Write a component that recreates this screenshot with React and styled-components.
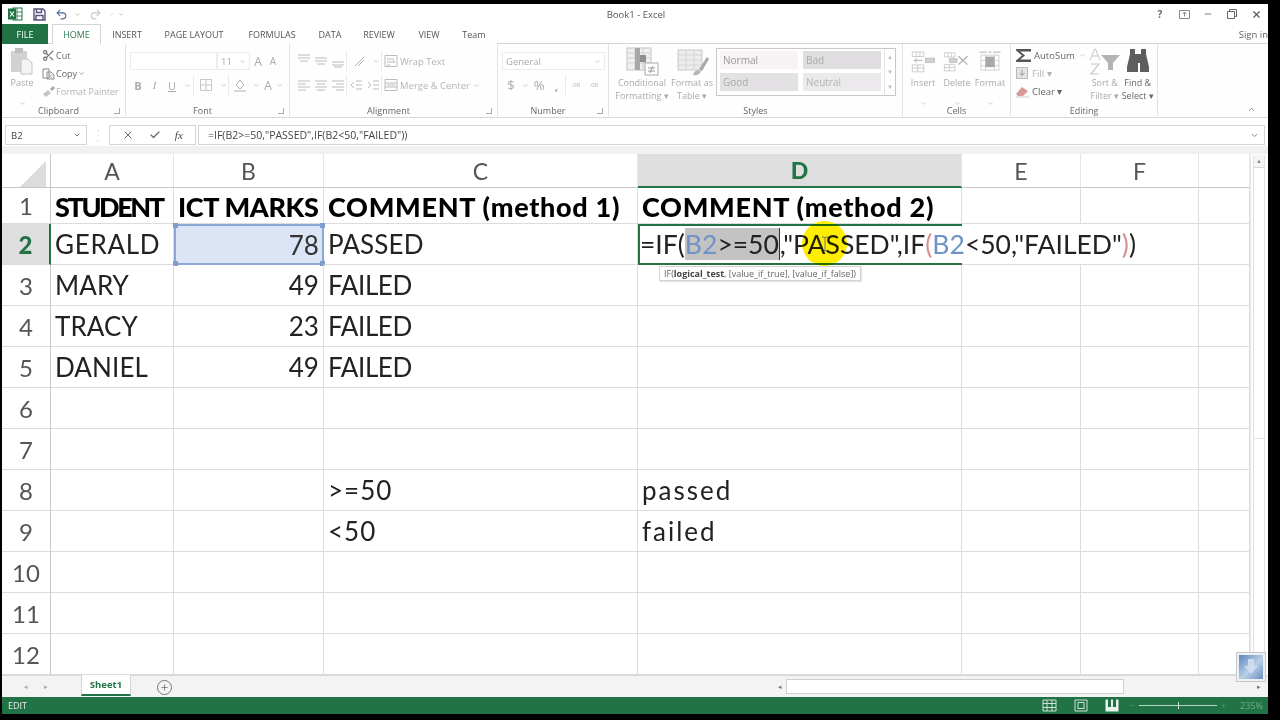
import React from "react";
import styled, { createGlobalStyle } from "styled-components";
import { Scissors, X, Check, ChevronUp, ChevronDown, Plus, Minus, Undo2, Redo2 } from "lucide-react";

const GlobalStyle = createGlobalStyle`
  html, body { margin: 0; padding: 0; background: #000; }
  body { width: 1280px; height: 720px; overflow: hidden; font-family: "Open Sans", "Liberation Sans", sans-serif; }
`;

const Frame = styled.div`
  width: 1280px;
  height: 720px;
  background: #000;
  padding: 4px 12px 6px 2px;
  box-sizing: border-box;
`;

const Window = styled.div`
  position: relative;
  width: 1266px;
  height: 710px;
  background: #fff;
  display: flex;
  flex-direction: column;
  overflow: hidden;
  filter: blur(0.4px);
`;

const TitleBar = styled.div`
  height: 20px;
  display: flex;
  align-items: center;
  position: relative;
  color: #666;
  flex: none;
`;

const QuickSlot = styled.div`
  width: ${(p) => p.$w}px;
  display: flex;
  align-items: center;
  justify-content: center;
  gap: ${(p) => p.$gap || 2}px;
  color: ${(p) => p.$color || "#666"};
`;

const Title = styled.div`
  flex: 1;
  text-align: center;
  font-size: 9.5px;
  color: #555;
`;

const TabRow = styled.div`
  height: 20px;
  display: flex;
  align-items: stretch;
  flex: none;
  box-shadow: inset 0 -1px 0 #d4d4d4;
`;

const Tab = styled.div`
  width: ${(p) => p.$w}px;
  margin-right: ${(p) => p.$gap || 0}px;
  display: flex;
  align-items: center;
  justify-content: center;
  font-size: 9px;
  color: ${(p) => (p.$active ? "#2c7a50" : "#555")};
  background: ${(p) => (p.$file ? "#217346" : "#fff")};
  ${(p) => p.$file && "color: #fff;"}
  ${(p) => p.$active && "border: 1px solid #d4d4d4; border-bottom: 0; box-sizing: border-box;"}
`;

const SignIn = styled.div`
  margin-left: auto;
  font-size: 9.5px;
  color: #666;
  padding-top: 1px;
  align-self: center;
  white-space: nowrap;
`;

const Ribbon = styled.div`
  height: 74px;
  flex: none;
  display: flex;
  background: #fefefe;
  border-bottom: 1px solid #d8d8d8;
  box-sizing: border-box;
`;

const Group = styled.div`
  width: ${(p) => p.$w}px;
  flex: none;
  display: flex;
  flex-direction: column;
  box-sizing: border-box;
  border-right: ${(p) => (p.$last ? "0" : "1px solid #e4e4e4")};
  margin-bottom: 1px;
`;

const GroupBody = styled.div`
  flex: 1;
  display: flex;
  padding: ${(p) => p.$pad || "0"};
  gap: ${(p) => p.$gap || 0}px;
  min-height: 0;
`;

const GroupLabel = styled.div`
  height: 12px;
  display: grid;
  grid-template-columns: 1fr auto 1fr;
  align-items: center;
  font-size: 9px;
  color: #666;
  padding: 0 5px;
`;

const GroupName = styled.span`
  margin-right: ${(p) => (p.$shift ? 10 : 0)}px;
`;

const Launcher = styled.span`
  justify-self: end;
  width: 5px;
  height: 5px;
  border-right: 1px solid #aaa;
  border-bottom: 1px solid #aaa;
`;

const Stack = styled.div`
  display: flex;
  flex-direction: column;
  gap: ${(p) => p.$gap || 0}px;
  padding-top: ${(p) => p.$top || 0}px;
`;

const ToolRow = styled.div`
  height: 18px;
  display: flex;
  align-items: center;
  gap: ${(p) => p.$gap || 0}px;
  font-size: ${(p) => p.$size || 9}px;
  color: ${(p) => (p.$dim ? "#b4b4b4" : "#666")};
  white-space: nowrap;
`;

const Tool = styled.div`
  width: ${(p) => p.$w}px;
  height: 18px;
  flex: none;
  display: flex;
  align-items: center;
  justify-content: center;
  font-size: ${(p) => p.$size || 11}px;
  font-weight: ${(p) => (p.$bold ? 700 : 400)};
  font-style: ${(p) => (p.$italic ? "italic" : "normal")};
  text-decoration: ${(p) => (p.$under ? "underline" : "none")};
  color: ${(p) => p.$color || "#aaa"};
  font-family: ${(p) => (p.$serif ? '"Liberation Serif", serif' : "inherit")};
`;

const Sep = styled.div`
  width: 1px;
  height: 20px;
  background: #eaeaea;
  flex: none;
`;

const FieldBox = styled.div`
  width: ${(p) => p.$w}px;
  height: 18px;
  flex: none;
  box-sizing: border-box;
  border: 1px solid #ececec;
  background: #fff;
  display: flex;
  align-items: center;
  justify-content: space-between;
  padding: 0 3px;
  font-size: 9.5px;
  color: #aaa;
`;

const Large = styled.div`
  width: ${(p) => p.$w}px;
  margin-right: ${(p) => p.$mr || 0}px;
  flex: none;
  display: flex;
  flex-direction: column;
  align-items: center;
  padding-top: 3px;
  font-size: 9px;
  line-height: 13px;
  color: ${(p) => (p.$dark ? "#666" : "#aaa")};
  text-align: center;
  white-space: nowrap;
  & > svg { height: 29px; flex: none; }
`;

const Gallery = styled.div`
  width: 180px;
  height: 48px;
  margin-top: 4px;
  box-sizing: border-box;
  border: 1px solid #c8c8c8;
  display: flex;
`;

const StyleGrid = styled.div`
  flex: 1;
  display: grid;
  grid-template-columns: 78px 78px;
  grid-template-rows: 18px 18px;
  gap: 4px 5px;
  padding: 2px 3px;
`;

const StyleCell = styled.div`
  background: ${(p) => p.$bg};
  color: ${(p) => p.$color};
  font-size: 10px;
  display: flex;
  align-items: center;
  padding-left: 3px;
`;

const GalleryScroll = styled.div`
  width: 15px;
  border-left: 1px solid #e4e4e4;
  display: grid;
  grid-template-rows: repeat(3, 1fr);
  color: #bbb;
  font-size: 6px;
  align-items: center;
  justify-items: center;
`;

const CollapseSlot = styled.div`
  flex: 1;
  display: flex;
  align-items: flex-end;
  justify-content: flex-end;
  padding: 0 12px 3px 0;
  color: #888;
`;

const FormulaBar = styled.div`
  height: 28px;
  flex: none;
  display: flex;
  align-items: flex-start;
  padding: 7px 3px 0 3px;
  box-sizing: border-box;
  background: #fff;
`;

const BarBox = styled.div`
  width: ${(p) => p.$w || "auto"};
  flex: ${(p) => (p.$grow ? 1 : "none")};
  height: 20px;
  box-sizing: border-box;
  border: 1px solid #d6d6d6;
  display: flex;
  align-items: center;
  justify-content: ${(p) => p.$justify || "flex-start"};
  padding: 0 5px 0 ${(p) => p.$left || 5}px;
  margin-left: ${(p) => p.$gap || 0}px;
  font-size: ${(p) => p.$size || 9.5}px;
  color: #444;
  background: #fff;
`;

const BarDots = styled.div`
  width: 22px;
  padding-top: 3px;
  text-align: center;
  color: #bbb;
  font-size: 9px;
  line-height: 5px;
`;

const SheetArea = styled.div`
  flex: 1;
  display: flex;
  min-height: 0;
  padding-top: 8px;
  background: linear-gradient(#f1f1f1 0 8px, #fff 8px);
`;

const Grid = styled.div`
  display: grid;
  grid-template-columns: 49px 123px 150px 314px 324px 119px 118px 51px;
  grid-template-rows: 34px 36px repeat(11, 41px);
  background: #fff;
`;

const Corner = styled.div`
  border-right: 1px solid #c6c6c6;
  border-bottom: 1px solid #c6c6c6;
  background: #fff;
  &::after {
    content: "";
    display: block;
    width: 0;
    height: 0;
    margin: 7px 0 0 18px;
    border-left: 26px solid transparent;
    border-bottom: 26px solid #dcdcdc;
  }
`;

const ColHead = styled.div`
  box-sizing: border-box;
  display: flex;
  align-items: center;
  justify-content: center;
  font-family: Lato, sans-serif;
  font-size: 23px;
  font-weight: ${(p) => (p.$on ? 900 : 400)};
  color: ${(p) => (p.$on ? "#217346" : "#555")};
  background: ${(p) => (p.$on ? "#dedede" : "#fff")};
  border-right: 1px solid #e6e6e6;
  border-bottom: ${(p) => (p.$on ? "2px solid #217346" : "1px solid #c6c6c6")};
`;

const RowHead = styled.div`
  box-sizing: border-box;
  display: flex;
  align-items: center;
  justify-content: center;
  font-family: Lato, sans-serif;
  font-size: 24px;
  font-weight: ${(p) => (p.$on ? 900 : 400)};
  color: ${(p) => (p.$on ? "#217346" : "#555")};
  background: ${(p) => (p.$on ? "#dedede" : "#fff")};
  border-bottom: 1px solid #dcdcdc;
  border-right: ${(p) => (p.$on ? "2px solid #217346" : "1px solid #c6c6c6")};
`;

const Cell = styled.div`
  position: relative;
  box-sizing: border-box;
  display: flex;
  align-items: center;
  justify-content: ${(p) => (p.$right ? "flex-end" : "flex-start")};
  padding: ${(p) => (p.$bold ? "2px 4px 0" : "0 4px")};
  font-family: Lato, sans-serif;
  font-size: ${(p) => (p.$bold ? 27 : 26)}px;
  font-weight: ${(p) => (p.$bold ? 900 : 400)};
  letter-spacing: ${(p) => p.$track ?? 0.1}px;
  color: ${(p) => (p.$bold ? "#000" : "#222")};
  white-space: nowrap;
  border-right: ${(p) => (p.$open ? "0" : "1px solid #dcdcdc")};
  border-bottom: 1px solid #dcdcdc;
`;

const RangeCell = styled(Cell)`
  background: #dbe5f6;
  color: #333;
  padding-right: 3px;
  border: 2px solid #8ca7d4;
`;

const Handle = styled.span`
  position: absolute;
  width: 5px;
  height: 5px;
  background: #7f9cce;
  ${(p) => p.$y}: -3px;
  ${(p) => p.$x}: -3px;
`;

const EditCell = styled(Cell)`
  z-index: 2;
  padding: 0 0 2px 0;
  border: 2px solid #217346;
  border-right: 0;
  background: #fff;
  font-size: 26.5px;
  letter-spacing: 0;
  color: #222;
`;

const EditNeighbour = styled(Cell)`
  background: #fff;
`;

const Ref = styled.span`
  color: ${(p) => p.$color};
`;

const Picked = styled.span`
  background: #c3c3c3;
  border-right: 1px solid #333;
`;

const ArgTip = styled.div`
  position: absolute;
  left: 19px;
  top: 40px;
  height: 13px;
  padding: 0 4px;
  display: block;
  line-height: 13px;
  background: #fff;
  border: 1px solid #d4d4d4;
  box-shadow: 1px 1px 1px #e4e4e4;
  font-family: "Open Sans", sans-serif;
  font-size: 9px;
  letter-spacing: 0;
  color: #666;
  & b { color: #444; }
`;

const CursorGlow = styled.div`
  position: absolute;
  left: 162px;
  top: -5px;
  width: 45px;
  height: 45px;
  border-radius: 50%;
  background: #ffee00;
  mix-blend-mode: multiply;
  display: flex;
  align-items: center;
  justify-content: center;
`;

const VScroll = styled.div`
  flex: 1;
  padding: 1px 3px 0 2px;
  background: #fff;
  border-left: 1px solid #e8e8e8;
`;

const VTrack = styled.div`
  height: 100%;
  border-left: 1px solid #e2e2e2;
  border-right: 1px solid #e2e2e2;
`;

const ScrollButton = styled.div`
  height: 12px;
  display: flex;
  align-items: center;
  justify-content: center;
  background: #f4f4f4;
  border-bottom: 1px solid #d8d8d8;
  color: #888;
  font-size: 6px;
`;

const VThumb = styled.div`
  height: 270px;
  background: #fff;
  border-bottom: 1px solid #e2e2e2;
`;

const SheetTabs = styled.div`
  height: 22px;
  flex: none;
  display: flex;
  align-items: stretch;
  background: #f3f3f3;
  border-top: 1px solid #d8d8d8;
  box-sizing: border-box;
`;

const TabNav = styled.div`
  width: 79px;
  display: flex;
  align-items: center;
  justify-content: center;
  gap: 16px;
  padding-right: 12px;
  box-sizing: border-box;
  color: #aaa;
  font-size: 7px;
`;

const SheetTab = styled.div`
  width: 50px;
  background: #fff;
  box-sizing: border-box;
  display: flex;
  align-items: center;
  justify-content: center;
  font-size: 9.5px;
  font-weight: 700;
  color: #217346;
  border-left: 1px solid #d4d4d4;
  border-right: 1px solid #d4d4d4;
  border-bottom: 2px solid #217346;
  margin-top: -1px;
  margin-bottom: 1px;
`;

const AddSheet = styled.div`
  width: 13px;
  height: 13px;
  margin: 4px 0 0 26px;
  border: 1px solid #777;
  border-radius: 50%;
  display: flex;
  align-items: center;
  justify-content: center;
  color: #666;
`;

const HScroll = styled.div`
  flex: 1;
  margin-left: 602px;
  display: flex;
  align-items: stretch;
  padding: 3px 3px 3px 0;
  color: #777;
  font-size: 7px;
`;

const HArrow = styled.div`
  width: 12px;
  display: flex;
  align-items: center;
  justify-content: center;
`;

const HThumb = styled.div`
  width: 338px;
  background: #fff;
  border: 1px solid #cfcfcf;
  box-sizing: border-box;
`;

const HTrack = styled.div`
  flex: 1;
`;

const StatusBar = styled.div`
  height: 17px;
  flex: none;
  background: #217346;
  display: flex;
  align-items: center;
  padding: 0 5px 0 6px;
  font-size: 9px;
  color: #e8f0ea;
`;

const ViewIcons = styled.div`
  margin-left: auto;
  display: flex;
  align-items: center;
  gap: 17px;
  color: #cfe0d4;
`;

const ZoomSlider = styled.div`
  display: flex;
  align-items: center;
  margin-left: 10px;
  gap: 3px;
  color: #4f9a70;
`;

const ZoomTrack = styled.div`
  position: relative;
  width: 78px;
  height: 1px;
  background: #b8d4c2;
  &::after {
    content: "";
    position: absolute;
    left: 39px;
    top: -3px;
    width: 1px;
    height: 7px;
    background: #d8e8dd;
  }
`;

const ZoomValue = styled.div`
  width: 28px;
  margin-left: 8px;
  text-align: right;
  color: #6fae8a;
  font-size: 9px;
`;

const Thumbnail = styled.div`
  position: absolute;
  right: 2px;
  bottom: 32px;
  width: 30px;
  height: 30px;
  box-sizing: border-box;
  background: #eef0f3;
  border: 1px solid #c4c8cc;
  padding: 2px;
  & > div {
    height: 100%;
    display: flex;
    align-items: center;
    justify-content: center;
    background: linear-gradient(135deg, #5f86bd, #b8cfe6 55%, #6a8fc0);
  }
`;

const SmallBox = ({ children, w = 14, h = 14 }) => (
  <svg width={w} height={h} viewBox={`0 0 ${w} ${h}`} fill="none" stroke="currentColor" strokeWidth="1">
    {children}
  </svg>
);

const ExcelLogo = () => (
  <svg width="15" height="14" viewBox="0 0 15 14">
    <rect x="5" y="1" width="9" height="12" fill="#fff" stroke="#217346" />
    <path d="M9 1v12M5 5h9M5 9h9" stroke="#217346" strokeWidth="0.8" />
    <rect x="0" y="1.5" width="8" height="11" fill="#217346" />
    <path d="M2 4.5l4 5M6 4.5l-4 5" stroke="#fff" strokeWidth="1.2" />
  </svg>
);

const SaveIcon = () => (
  <svg width="13" height="13" viewBox="0 0 13 13" fill="none" stroke="#5a4f78" strokeWidth="1.4">
    <path d="M1 1h9l2 2v9H1z" />
    <path d="M3.5 1v3.5h5V1M3 12V7.5h7V12" />
  </svg>
);

const PasteIcon = () => (
  <svg width="24" height="29" viewBox="0 0 24 29">
    <rect x="1" y="4" width="16" height="21" fill="#d2d2d2" />
    <rect x="5" y="1" width="8" height="5" fill="#bdbdbd" />
    <path d="M11 12h7l4 4v11H11z" fill="#f4f4f4" stroke="#c4c4c4" />
  </svg>
);

const CopyIcon = () => (
  <SmallBox w={13} h={13}>
    <path d="M1 2h6v9H1zM5 5h4l3 3v4H5z" stroke="#888" fill="#fff" />
    <path d="M6.5 8h4M6.5 10h4" stroke="#aaa" />
  </SmallBox>
);

const BrushIcon = () => (
  <svg width="14" height="13" viewBox="0 0 14 13">
    <path d="M1 9l5-4 3 3-5 4z" fill="#c4c4c4" />
    <path d="M8 4l3-3 2 2-3 3z" fill="#a8a8a8" />
  </svg>
);

const LinesIcon = ({ kind }) => {
  const starts = { left: [1, 1, 1], mid: [1, 3, 1], right: [1, 5, 1] };
  const x = starts[kind];
  return (
    <SmallBox>
      <path d={`M${x[0]} 3h12M${x[1]} 6h8M${x[2]} 9h12M${x[1]} 12h8`} stroke="#bbb" />
    </SmallBox>
  );
};

const CondIcon = () => (
  <svg width="38" height="29" viewBox="0 0 38 29">
    <rect x="4" y="1" width="24" height="22" fill="#f0f0f0" stroke="#c4c4c4" />
    <path d="M12 1v22M20 1v22M4 6h24M4 11h24M4 16h24" stroke="#d0d0d0" />
    <rect x="12" y="1" width="5" height="22" fill="#a8a8a8" />
    <rect x="17" y="8" width="6" height="7" fill="#8f8f8f" />
    <rect x="22" y="16" width="13" height="12" fill="#fff" stroke="#a8a8a8" />
    <path d="M25 21h7M25 24h7M30 19l-3 7" stroke="#999" />
  </svg>
);

const TableIcon = () => (
  <svg width="38" height="29" viewBox="0 0 38 29">
    <rect x="5" y="3" width="24" height="20" fill="#ececec" stroke="#c8c8c8" />
    <path d="M13 3v20M21 3v20M5 8h24M5 13h24M5 18h24" stroke="#d4d4d4" />
    <path d="M26 22l8-12 2 2-7 12z" fill="#a8a8a8" />
    <path d="M20 28c1-4 4-6 8-4-1 3-4 5-8 4z" fill="#b4b4b4" />
  </svg>
);

const InsertIcon = () => (
  <svg width="26" height="29" viewBox="0 0 34 29" fill="none" stroke="#bdbdbd">
    <path d="M3 2h15v6H3zM8 2v6M13 2v6M3 19h15v9H3zM10 19v9M3 23h15" />
    <path d="M16 13H6M9 10l-3 3 3 3" stroke="#999" />
    <rect x="20" y="10" width="12" height="6" fill="#d0d0d0" />
  </svg>
);

const DeleteIcon = () => (
  <svg width="28" height="29" viewBox="0 0 40 29" fill="none" stroke="#bdbdbd">
    <path d="M2 2h15v6H2zM7 2v6M12 2v6M2 19h15v9H2zM9 19v9M2 23h15" />
    <rect x="9" y="10" width="11" height="6" fill="#d0d0d0" />
    <path d="M22 7l13 12M35 7L22 19" stroke="#aaa" strokeWidth="1.6" />
  </svg>
);

const FormatIcon = () => (
  <svg width="24" height="29" viewBox="0 0 32 29" fill="none" stroke="#c4c4c4">
    <path d="M4 6h24v20H4zM10 6v20M22 6v20M4 13h24M4 20h24" />
    <rect x="10" y="8" width="12" height="14" fill="#a8a8a8" stroke="none" />
    <path d="M2 2h10M20 2h10M14 2h4" stroke="#999" />
  </svg>
);

const SigmaIcon = () => (
  <svg width="17" height="15" viewBox="0 0 17 15">
    <path d="M1 1h15v2.4H5.2L10 7.4 5.2 11.6H16V14H1v-1.6L7 7.4 1 2.6z" fill="#555" />
  </svg>
);

const FillIcon = () => (
  <SmallBox>
    <rect x="1.5" y="1.5" width="11" height="11" fill="#e4e4e4" stroke="#bbb" />
    <path d="M7 3.5v6M4.5 7L7 9.5 9.5 7" stroke="#999" />
  </SmallBox>
);

const EraserIcon = () => (
  <svg width="15" height="13" viewBox="0 0 15 13">
    <path d="M1 9l6-7 6 4-5 5H3z" fill="#d79a9a" />
    <path d="M1 12h13" stroke="#ccc" />
  </svg>
);

const SortIcon = () => (
  <svg width="34" height="29" viewBox="0 0 34 29">
    <path d="M2 13L6.5 2h1L12 13M4 9h7" fill="none" stroke="#c4c4c4" />
    <path d="M3 17h8l-8 10h8" fill="none" stroke="#c4c4c4" strokeWidth="1.2" />
    <path d="M13 8h19l-7 8v7h-5v-7z" fill="#b4b4b4" />
  </svg>
);

const BinocularsIcon = () => (
  <svg width="24" height="29" viewBox="0 0 24 29">
    <path d="M4 2h5v5h6V2h5v5l3 13v5h-9v-9h-2v9H1v-5L4 7z" fill="#5e5e5e" />
  </svg>
);

const GridViewIcon = () => (
  <svg width="15" height="13" viewBox="0 0 15 13" fill="none" stroke="currentColor">
    <path d="M1 1h13v11H1zM5 1v11M10 1v11M1 4.5h13M1 8.5h13" />
  </svg>
);

const PageViewIcon = () => (
  <svg width="14" height="13" viewBox="0 0 14 13" fill="none" stroke="currentColor">
    <path d="M1 1h12v11H1z" />
    <rect x="4" y="3.5" width="6" height="6" />
  </svg>
);

const BreakViewIcon = () => (
  <svg width="14" height="13" viewBox="0 0 14 13">
    <rect x="0.5" y="0.5" width="13" height="12" fill="#e8f0ea" />
    <rect x="3" y="0" width="3" height="8" fill="#217346" />
    <rect x="8" y="0" width="3" height="8" fill="#217346" />
  </svg>
);

const DownArrow = () => (
  <svg width="18" height="18" viewBox="0 0 18 18">
    <path d="M6 1h6v7h4l-7 8-7-8h4z" fill="#d4e2f0" opacity="0.8" />
  </svg>
);

const IBeam = () => (
  <svg width="10" height="16" viewBox="0 0 10 16" fill="none" stroke="#777" strokeWidth="1">
    <path d="M2 1h2l1 1 1-1h2M5 2v12M2 15h2l1-1 1 1h2" />
  </svg>
);

const columns = ["A", "B", "C", "D", "E", "F", ""];

const rows = [
  ["MARY", "49", "FAILED"],
  ["TRACY", "23", "FAILED"],
  ["DANIEL", "49", "FAILED"],
  ["", "", ""],
  ["", "", ""],
  ["", "", ">=50", "passed"],
  ["", "", "<50", "failed"],
  ["", "", ""],
  ["", "", ""],
  ["", "", ""],
];

const EditRow = () => (
  <>
    <RowHead $on>2</RowHead>
    <Cell $track={0.7}>GERALD</Cell>
    <RangeCell $right>
      78
      <Handle $y="top" $x="left" />
      <Handle $y="top" $x="right" />
      <Handle $y="bottom" $x="left" />
      <Handle $y="bottom" $x="right" />
    </RangeCell>
    <Cell>PASSED</Cell>
    <EditCell>
      =IF(
      <Picked>
        <Ref $color="#6f93c6">B2</Ref>&gt;=50
      </Picked>
      ,"PASSED",IF<Ref $color="#d98f8f">(</Ref>
      <Ref $color="#6f93c6">B2</Ref>&lt;50,"FAILED"<Ref $color="#d98f8f">)</Ref>)
      <ArgTip>
        IF(<b>logical_test</b>, [value_if_true], [value_if_false])
      </ArgTip>
      <CursorGlow>
        <IBeam />
      </CursorGlow>
    </EditCell>
    <EditNeighbour $open />
    <EditNeighbour />
    <Cell />
  </>
);

const App = () => {
  return (
    <>
      <GlobalStyle />
      <Frame>
        <Window>
          <TitleBar>
            <QuickSlot $w={26}>
              <ExcelLogo />
            </QuickSlot>
            <QuickSlot $w={22}>
              <SaveIcon />
            </QuickSlot>
            <QuickSlot $w={36} $gap={6} $color="#4a6f9e">
              <Undo2 size={13} strokeWidth={2} />
              <ChevronDown size={7} color="#999" />
            </QuickSlot>
            <QuickSlot $w={32} $gap={6} $color="#c8c8c8">
              <Redo2 size={13} strokeWidth={2} />
              <ChevronDown size={7} />
            </QuickSlot>
            <QuickSlot $w={6} $color="#888">
              <ChevronDown size={7} />
            </QuickSlot>
            <Title>Book1 - Excel</Title>
            <QuickSlot $w={24} $color="#666">
              <b style={{ fontSize: 10 }}>?</b>
            </QuickSlot>
            <QuickSlot $w={24} $color="#888">
              <SmallBox w={11} h={9}>
                <path d="M.5.5h10v8H.5zM5.500 6.500v-4M3.500 4l2-2 2 2" />
              </SmallBox>
            </QuickSlot>
            <QuickSlot $w={24} $color="#666">
              <Minus size={10} strokeWidth={2} />
            </QuickSlot>
            <QuickSlot $w={24} $color="#666">
              <SmallBox w={10} h={10}>
                <path d="M.5 2.500h7v7h-7zM2.500 2.500v-2h7v7h-2" />
              </SmallBox>
            </QuickSlot>
            <QuickSlot $w={24} $color="#555">
              <X size={11} strokeWidth={2.4} />
            </QuickSlot>
          </TitleBar>

          <TabRow>
            <Tab $file $w={46} $gap={4}>
              FILE
            </Tab>
            <Tab $active $w={49}>
              HOME
            </Tab>
            <Tab $w={52}>INSERT</Tab>
            <Tab $w={82}>PAGE LAYOUT</Tab>
            <Tab $w={74}>FORMULAS</Tab>
            <Tab $w={42}>DATA</Tab>
            <Tab $w={56}>REVIEW</Tab>
            <Tab $w={44}>VIEW</Tab>
            <Tab $w={46}>Team</Tab>
            <SignIn>Sign in</SignIn>
          </TabRow>

          <Ribbon>
            <Group $w={124}>
              <GroupBody>
                <Large $w={40}>
                  <PasteIcon />
                  Paste
                  <ChevronDown size={7} />
                </Large>
                <Stack $top={2}>
                  <ToolRow $gap={1}>
                    <Scissors size={13} color="#666" />
                    Cut
                  </ToolRow>
                  <ToolRow $gap={1}>
                    <CopyIcon />
                    Copy <ChevronDown size={7} />
                  </ToolRow>
                  <ToolRow $dim>
                    <BrushIcon />
                    Format Painter
                  </ToolRow>
                </Stack>
              </GroupBody>
              <GroupLabel>
                <span />
                <GroupName $shift>Clipboard</GroupName>
                <Launcher />
              </GroupLabel>
            </Group>

            <Group $w={164}>
              <GroupBody $pad="8px 0 0 4px">
                <Stack $gap={6}>
                  <ToolRow>
                    <FieldBox $w={87} />
                    <FieldBox $w={33}>
                      11
                      <ChevronDown size={7} />
                    </FieldBox>
                    <Tool $w={16} $size={12}>
                      A
                    </Tool>
                    <Tool $w={14} $size={10}>
                      A
                    </Tool>
                  </ToolRow>
                  <ToolRow>
                    <Tool $w={16} $bold>
                      B
                    </Tool>
                    <Tool $w={17} $italic $serif>
                      I
                    </Tool>
                    <Tool $w={18} $under>
                      U
                    </Tool>
                    <Tool $w={12}>
                      <ChevronDown size={7} />
                    </Tool>
                    <Sep />
                    <Tool $w={24}>
                      <SmallBox>
                        <path d="M1.500 1.500h11v11h-11zM7 1.500v11M1.500 7h11" stroke="#c8c8c8" />
                      </SmallBox>
                    </Tool>
                    <Tool $w={10}>
                      <ChevronDown size={7} />
                    </Tool>
                    <Sep />
                    <Tool $w={22}>
                      <SmallBox>
                        <path d="M3 7l4-5 4 5-4 4zM1 13h12" stroke="#b4b4b4" />
                      </SmallBox>
                    </Tool>
                    <Tool $w={10}>
                      <ChevronDown size={7} />
                    </Tool>
                    <Tool $w={14} $size={12}>
                      A
                    </Tool>
                    <Tool $w={8}>
                      <ChevronDown size={7} />
                    </Tool>
                  </ToolRow>
                </Stack>
              </GroupBody>
              <GroupLabel>
                <span />
                <GroupName $shift>Font</GroupName>
                <Launcher />
              </GroupLabel>
            </Group>

            <Group $w={208}>
              <GroupBody $pad="8px 0 0 5px">
                <Stack $gap={6}>
                  <ToolRow $dim $size={9.5}>
                    <Tool $w={17}>
                      <SmallBox>
                        <path d="M1 1h12M1 4h12M3 7h8" stroke="#bbb" />
                      </SmallBox>
                    </Tool>
                    <Tool $w={17}>
                      <SmallBox>
                        <path d="M1 4h12M1 7h12M3 10h8" stroke="#bbb" />
                      </SmallBox>
                    </Tool>
                    <Tool $w={17}>
                      <SmallBox>
                        <path d="M1 8h12M1 11h12M3 13h8" stroke="#bbb" />
                      </SmallBox>
                    </Tool>
                    <Sep />
                    <Tool $w={24}>
                      <SmallBox>
                        <path d="M3 12L12 3M6 12l6-6" stroke="#b4b4b4" />
                      </SmallBox>
                    </Tool>
                    <Tool $w={10}>
                      <ChevronDown size={7} />
                    </Tool>
                    <Sep />
                    <Tool $w={18}>
                      <SmallBox>
                        <path d="M1 1.500h12v11H1zM3 5h7M3 8h8l-2-1.500M3 11h3" stroke="#bbb" />
                      </SmallBox>
                    </Tool>
                    <span>Wrap Text</span>
                  </ToolRow>
                  <ToolRow $dim $size={9.5}>
                    <Tool $w={17}>
                      <LinesIcon kind="left" />
                    </Tool>
                    <Tool $w={17}>
                      <LinesIcon kind="mid" />
                    </Tool>
                    <Tool $w={17}>
                      <LinesIcon kind="right" />
                    </Tool>
                    <Sep />
                    <Tool $w={18}>
                      <SmallBox>
                        <path d="M7 3h6M7 7h6M7 11h6M5 4L2 7l3 3" stroke="#bbb" />
                      </SmallBox>
                    </Tool>
                    <Tool $w={16}>
                      <SmallBox>
                        <path d="M7 3h6M7 7h6M7 11h6M2 4l3 3-3 3" stroke="#bbb" />
                      </SmallBox>
                    </Tool>
                    <Sep />
                    <Tool $w={18}>
                      <SmallBox>
                        <path d="M1 1.500h12v11H1zM1 5h12M1 9h12M3 7h8" stroke="#bbb" />
                      </SmallBox>
                    </Tool>
                    <span>Merge &amp; Center</span>
                    <Tool $w={14}>
                      <ChevronDown size={7} />
                    </Tool>
                  </ToolRow>
                </Stack>
              </GroupBody>
              <GroupLabel>
                <span />
                <GroupName $shift>Alignment</GroupName>
                <Launcher />
              </GroupLabel>
            </Group>

            <Group $w={111}>
              <GroupBody $pad="8px 0 0 4px">
                <Stack $gap={6}>
                  <ToolRow>
                    <FieldBox $w={103}>
                      General
                      <ChevronDown size={7} />
                    </FieldBox>
                  </ToolRow>
                  <ToolRow>
                    <Tool $w={18} $size={13}>
                      $
                    </Tool>
                    <Tool $w={10}>
                      <ChevronDown size={7} />
                    </Tool>
                    <Tool $w={18} $size={13}>
                      %
                    </Tool>
                    <Tool $w={17} $bold $size={12}>
                      ,
                    </Tool>
                    <Sep />
                    <Tool $w={20} $size={6}>
                      .00
                    </Tool>
                    <Tool $w={16} $size={6}>
                      .00
                    </Tool>
                  </ToolRow>
                </Stack>
              </GroupBody>
              <GroupLabel>
                <span />
                <GroupName $shift>Number</GroupName>
                <Launcher />
              </GroupLabel>
            </Group>

            <Group $w={294}>
              <GroupBody $pad="0 0 0 2px">
                <Large $w={62}>
                  <CondIcon />
                  Conditional
                  <span>Formatting ▾</span>
                </Large>
                <Large $w={38} $mr={5}>
                  <TableIcon />
                  Format as
                  <span>Table ▾</span>
                </Large>
                <Gallery>
                  <StyleGrid>
                    <StyleCell $bg="#f7f3f5" $color="#999">
                      Normal
                    </StyleCell>
                    <StyleCell $bg="#e0dde0" $color="#aaa">
                      Bad
                    </StyleCell>
                    <StyleCell $bg="#e3e1e3" $color="#aaa">
                      Good
                    </StyleCell>
                    <StyleCell $bg="#ebe9eb" $color="#b4b4b4">
                      Neutral
                    </StyleCell>
                  </StyleGrid>
                  <GalleryScroll>
                    <span>▲</span>
                    <span>▼</span>
                    <span>▼</span>
                  </GalleryScroll>
                </Gallery>
              </GroupBody>
              <GroupLabel>
                <span />
                Styles
                <span />
              </GroupLabel>
            </Group>

            <Group $w={108}>
              <GroupBody $pad="0 0 0 2px">
                <Large $w={36}>
                  <InsertIcon />
                  Insert
                  <ChevronDown size={7} />
                </Large>
                <Large $w={32}>
                  <DeleteIcon />
                  Delete
                  <ChevronDown size={7} />
                </Large>
                <Large $w={34}>
                  <FormatIcon />
                  Format
                  <ChevronDown size={7} />
                </Large>
              </GroupBody>
              <GroupLabel>
                <span />
                Cells
                <span />
              </GroupLabel>
            </Group>

            <Group $w={147}>
              <GroupBody $pad="0 0 0 4px">
                <Stack $top={2}>
                  <ToolRow $gap={2} $size={9.5}>
                    <SigmaIcon />
                    AutoSum
                    <Tool $w={12}>
                      <ChevronDown size={7} />
                    </Tool>
                  </ToolRow>
                  <ToolRow $dim $gap={3} $size={9.5}>
                    <FillIcon />
                    Fill ▾
                  </ToolRow>
                  <ToolRow $gap={2} $size={9.5}>
                    <EraserIcon />
                    Clear ▾
                  </ToolRow>
                </Stack>
                <Large $w={32}>
                  <SortIcon />
                  Sort &amp;
                  <span>Filter ▾</span>
                </Large>
                <Large $w={34} $dark>
                  <BinocularsIcon />
                  Find &amp;
                  <span>Select ▾</span>
                </Large>
              </GroupBody>
              <GroupLabel>
                <span />
                Editing
                <span />
              </GroupLabel>
            </Group>

            <CollapseSlot>
              <ChevronUp size={9} strokeWidth={2.5} />
            </CollapseSlot>
          </Ribbon>

          <FormulaBar>
            <BarBox $w="82px" $justify="space-between">
              B2
              <ChevronDown size={8} strokeWidth={3} color="#777" />
            </BarBox>
            <BarDots>
              ·<br />·<br />·
            </BarDots>
            <BarBox $w="87px" $justify="space-around">
              <X size={12} color="#666" />
              <Check size={12} color="#666" strokeWidth={2.4} />
              <i style={{ fontFamily: "Liberation Serif, serif", fontSize: 11 }}>fx</i>
            </BarBox>
            <BarBox $grow $gap={2} $left={9} $size={10.5} $justify="space-between">
              =IF(B2&gt;=50,"PASSED",IF(B2&lt;50,"FAILED"))
              <ChevronDown size={9} strokeWidth={2.5} color="#777" />
            </BarBox>
          </FormulaBar>

          <SheetArea>
            <Grid>
              <Corner />
              {columns.map((c, i) => (
                <ColHead key={i} $on={c === "D"}>
                  {c}
                </ColHead>
              ))}

              <RowHead>1</RowHead>
              <Cell $bold $track={-2.4}>STUDENT</Cell>
              <Cell $bold $track={-0.35}>ICT MARKS</Cell>
              <Cell $bold $track={0.7}>COMMENT (method 1)</Cell>
              <Cell $bold $track={0.7}>COMMENT (method 2)</Cell>
              <Cell />
              <Cell />
              <Cell />

              <EditRow />

              {rows.map((r, i) => (
                <React.Fragment key={i}>
                  <RowHead>{i + 3}</RowHead>
                  <Cell>{r[0]}</Cell>
                  <Cell $right>{r[1]}</Cell>
                  <Cell $track={r[2].length === 6 ? -0.4 : 1}>{r[2]}</Cell>
                  <Cell $track={2}>{r[3]}</Cell>
                  <Cell />
                  <Cell />
                  <Cell />
                </React.Fragment>
              ))}
            </Grid>
            <VScroll>
              <VTrack>
                <ScrollButton>▲</ScrollButton>
                <VThumb />
              </VTrack>
            </VScroll>
          </SheetArea>

          <SheetTabs>
            <TabNav>
              <span>◂</span>
              <span>▸</span>
            </TabNav>
            <SheetTab>Sheet1</SheetTab>
            <AddSheet>
              <Plus size={9} strokeWidth={2} />
            </AddSheet>
            <HScroll>
              <HArrow>◂</HArrow>
              <HThumb />
              <HTrack />
              <HArrow>▸</HArrow>
            </HScroll>
          </SheetTabs>

          <StatusBar>
            EDIT
            <ViewIcons>
              <GridViewIcon />
              <PageViewIcon />
              <BreakViewIcon />
            </ViewIcons>
            <ZoomSlider>
              <Minus size={7} />
              <ZoomTrack />
              <Plus size={7} />
            </ZoomSlider>
            <ZoomValue>235%</ZoomValue>
          </StatusBar>

          <Thumbnail>
            <div>
              <DownArrow />
            </div>
          </Thumbnail>
        </Window>
      </Frame>
    </>
  );
};

export default App;
